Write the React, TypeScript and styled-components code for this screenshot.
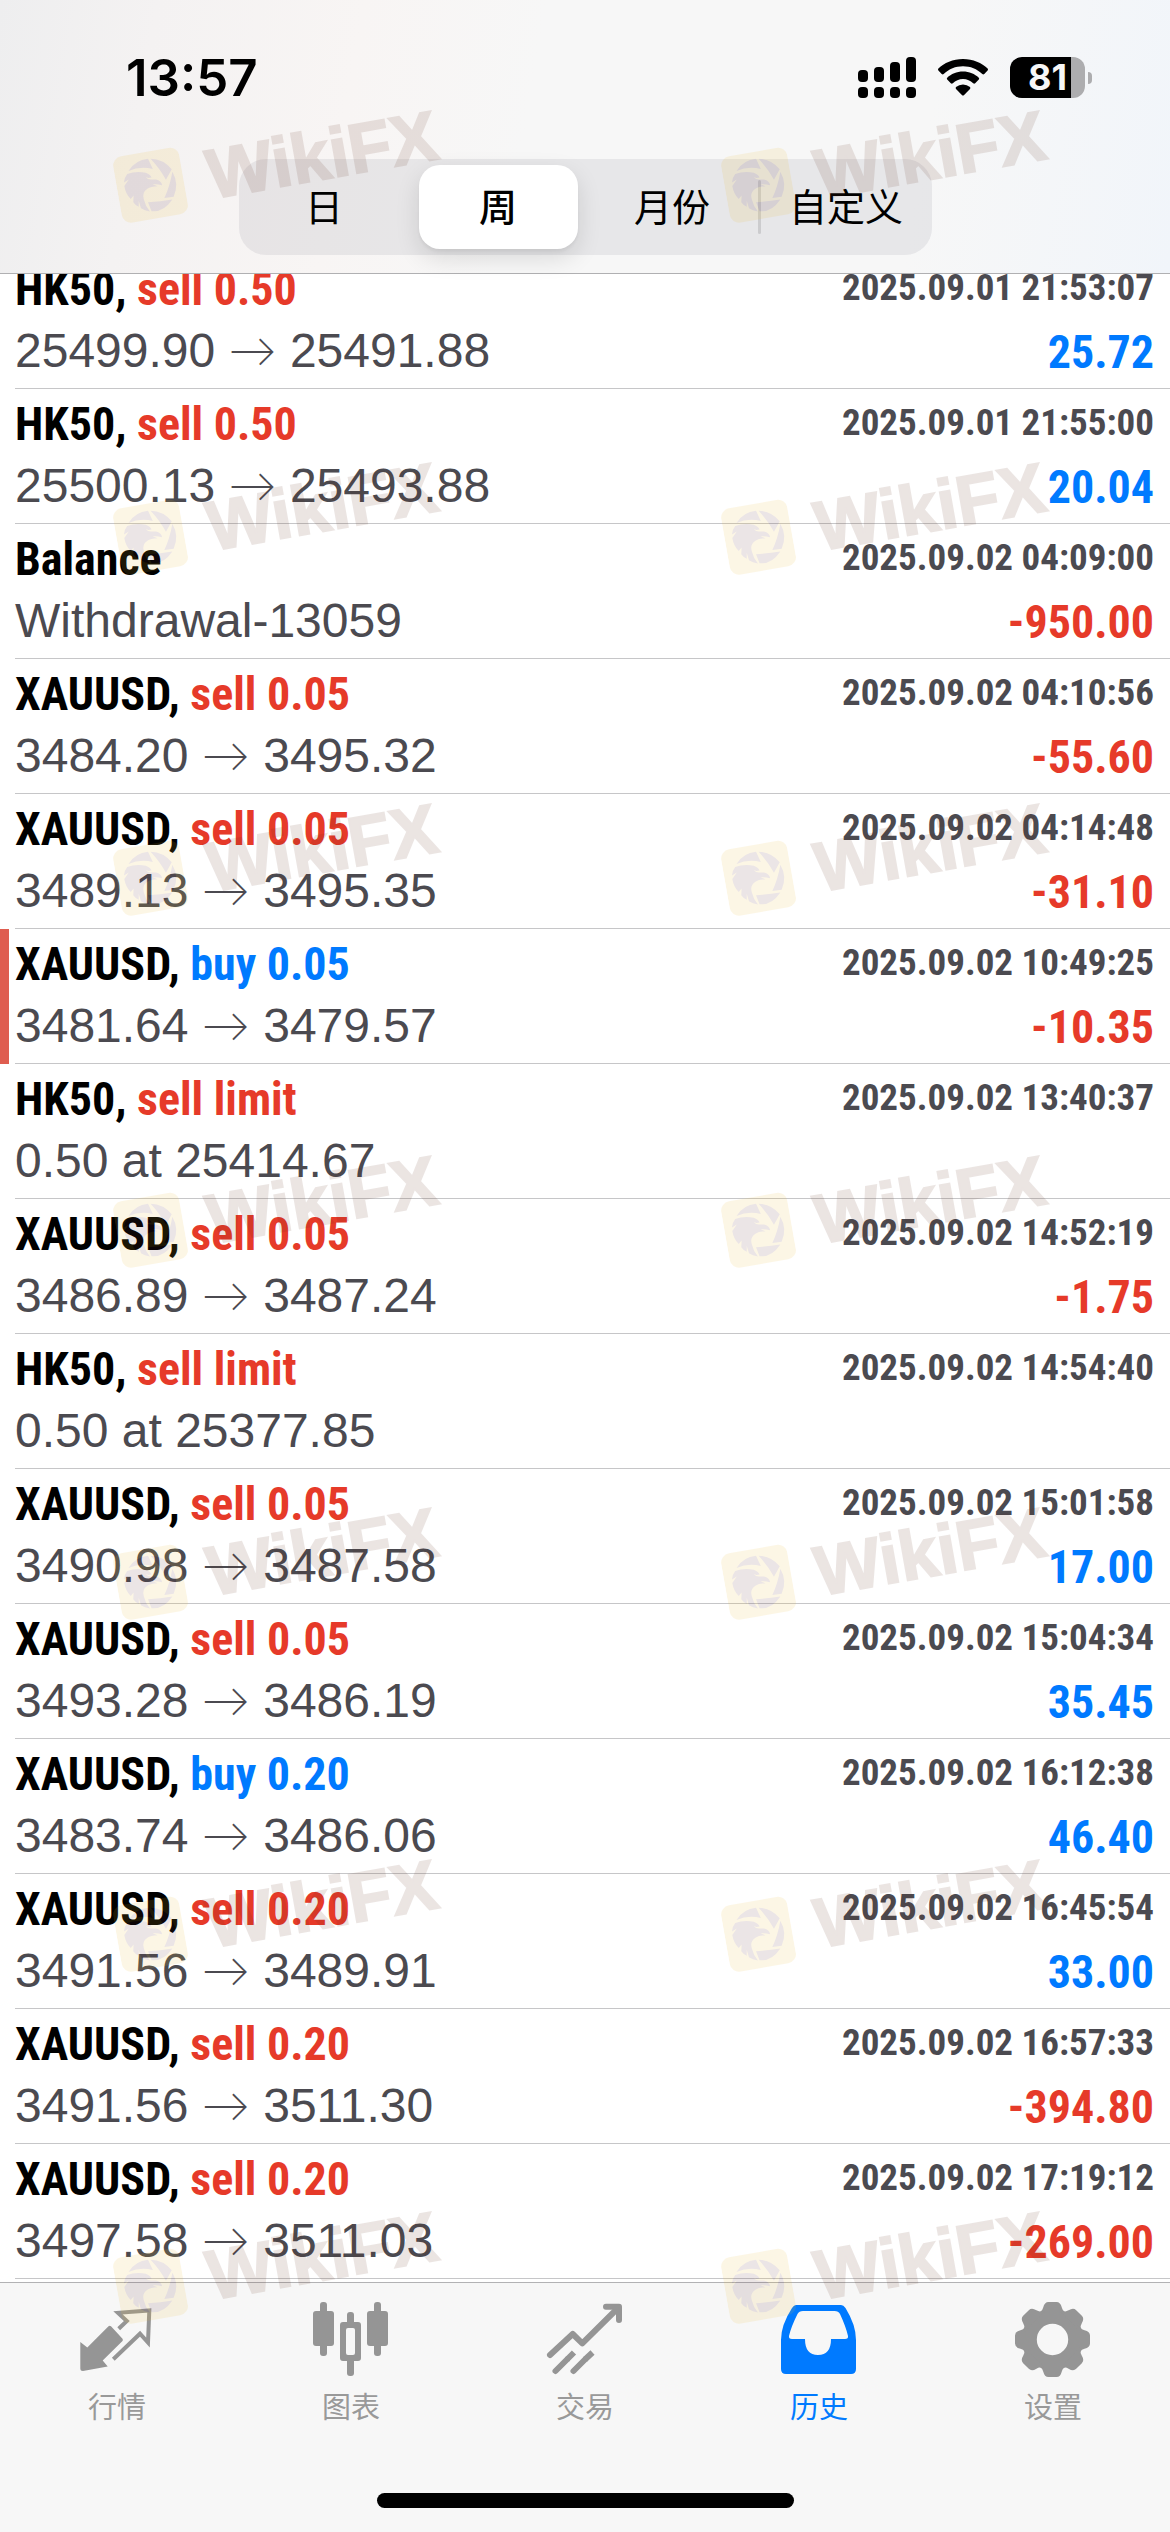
import React, { useState } from 'react';
import styled, { createGlobalStyle, css } from 'styled-components';

const GlobalStyle = createGlobalStyle`
  * { box-sizing: border-box; }
  body { margin: 0; background: #fff; }
  button { font: inherit; color: inherit; border: 0; padding: 0; background: none; cursor: pointer; }
`;

const condensed = '"Roboto Condensed", "Liberation Sans", sans-serif';
const regular = '"Liberation Sans", Arial, sans-serif';
const cjk = 'Inter, "Noto Sans CJK SC", sans-serif';

const blue = '#007aff';
const red = '#e63a29';
const slate = '#4b4a50';

const Screen = styled.div`
  position: relative;
  display: flex;
  flex-direction: column;
  height: 100vh;
  overflow: hidden;
  font-family: ${regular};
`;

const Header = styled.header`
  flex: none;
  padding-bottom: 18px;
  border-bottom: 1px solid #b0b0b2;
  background: linear-gradient(100deg, #eeeeef 0%, #f4f2f2 13%, #f8f5f4 30%, #f7f7f7 45%, #f7f7f7 78%, #f1f5fa 100%);
`;

const StatusBar = styled.div`
  display: flex;
  align-items: center;
  justify-content: space-between;
  height: 155px;
  padding: 0 78px 0 126px;
`;

const Clock = styled.time`
  font: 600 51px/60px Inter, sans-serif;
`;

const StatusIcons = styled.div`
  display: flex;
  align-items: center;
  gap: 22px;
`;

const BatteryWrap = styled.div`
  display: flex;
  align-items: center;
  gap: 3px;
`;

const BatteryBody = styled.div<{ $level: number }>`
  width: 75px;
  height: 41px;
  border-radius: 12px;
  text-align: center;
  color: #f7f7f7;
  font: 700 36px/41px Inter, sans-serif;
  background: linear-gradient(90deg, #000 ${p => p.$level}%, #adadaf ${p => p.$level}%);
`;

const BatteryTip = styled.div`
  width: 4px;
  height: 12px;
  border-radius: 0 4px 4px 0;
  background: #adadaf;
`;

const Segmented = styled.div`
  display: grid;
  grid-template-columns: repeat(4, 1fr);
  gap: 15px;
  width: calc(100% - 48px);
  max-width: 693px;
  height: 96px;
  margin: 4px auto 0;
  padding: 6px;
  border-radius: 27px;
  background: rgba(118, 118, 128, 0.12);
`;

const Segment = styled.button<{ $selected: boolean; $divided: boolean }>`
  && {
    position: relative;
    border-radius: 21px;
    color: #000;
    font: ${p => (p.$selected ? 500 : 400)} 38px/84px ${cjk};
    white-space: nowrap;
    ${p => p.$selected && css`
      background: #fff;
      box-shadow: 0 9px 24px rgba(0, 0, 0, 0.12), 0 3px 3px rgba(0, 0, 0, 0.04);
    `}
  }
  ${p => p.$divided && css`
    &::before {
      content: '';
      position: absolute;
      left: -9px;
      top: 15px;
      width: 3px;
      height: 54px;
      border-radius: 2px;
      background: rgba(142, 142, 147, 0.3);
    }
  `}
`;

const Main = styled.main`
  flex: 1;
  min-height: 0;
  overflow: hidden;
  background: #fff;
`;

/* The list is scrolled, so its first row runs under the header. */
const DealList = styled.ul`
  margin: -20px 0 0;
  padding: 0;
  list-style: none;
`;

const DealItem = styled.li<{ $flagged?: boolean }>`
  padding-left: 6px;
  border-left: 9px solid ${p => (p.$flagged ? '#df5d50' : 'transparent')};
`;

const DealBody = styled.div`
  height: 135px;
  padding: 4px 16px 0 0;
  border-bottom: 1px solid #c6c6c8;
`;

const Line = styled.div`
  display: flex;
  justify-content: space-between;
  height: 63px;
  white-space: nowrap;
`;

const Symbol = styled.span`
  color: #000;
  font: 700 46px/63px ${condensed};
`;

const Action = styled.span<{ $color: string }>`
  color: ${p => p.$color};
`;

const Stamp = styled.time`
  color: ${slate};
  font: 700 37px/60px ${condensed};
`;

const Detail = styled.span`
  color: ${slate};
  font: 400 48px/60px ${regular};
`;

const Arrow = styled.span`
  display: inline-block;
  width: 48px;
  text-align: center;
  font: 300 48px/48px Lato, sans-serif;
`;

const Amount = styled.span<{ $negative: boolean }>`
  color: ${p => (p.$negative ? red : blue)};
  font: 700 46px/62px ${condensed};
`;

const TabBar = styled.nav`
  flex: none;
  display: flex;
  flex-direction: column;
  align-items: center;
  height: 250px;
  padding: 17px 0 24px;
  border-top: 1px solid #b2b2b4;
  background: #f7f7f7;
`;

const Tabs = styled.div`
  display: grid;
  grid-template-columns: repeat(5, 1fr);
  width: 100%;
`;

const Tab = styled.button<{ $active: boolean }>`
  && {
    display: flex;
    flex-direction: column;
    align-items: center;
    gap: 6px;
    color: ${p => (p.$active ? blue : '#959595')};
    font: 400 29px/36px ${cjk};
  }
`;

const TabLabel = styled.span<{ $active: boolean }>`
  color: ${p => (p.$active ? blue : '#999')};
`;

const HomeIndicator = styled.div`
  width: 417px;
  max-width: 60%;
  height: 15px;
  margin-top: auto;
  border-radius: 8px;
  background: #000;
`;

const Overlay = styled.div`
  position: absolute;
  inset: 0;
  overflow: hidden;
  pointer-events: none;
  opacity: 0.12;
`;

const MarkRows = styled.div`
  margin-top: -13px;
`;

const MarkRow = styled.div<{ $height: number }>`
  display: grid;
  grid-template-columns: 52% 48%;
  align-items: center;
  height: ${p => p.$height}px;
`;

const Mark = styled.div`
  display: flex;
  align-items: center;
  gap: 24px;
  width: 324px;
  margin-left: 115px;
  transform: rotate(-10deg);
  color: #612f1e;
  font: 700 70px/80px ${regular};
  -webkit-text-stroke: 2px #612f1e;
`;

function EagleLogo() {
  return (
    <svg width="70" height="70" viewBox="46 67 210 210">
      <rect x="46" y="67" width="210" height="210" rx="30" fill="#eebc2f" />
      <g transform="rotate(10 151 172)" fill="#612f3e">
        <path d="M82 127Q103 93 143 89L158 121Q118 112 82 127Z" />
        <path d="M151 89Q191 90 217 122L199 155Q181 121 151 89Z" />
        <path d="M219 130Q241 168 223 208L194 212Q211 176 219 130Z" />
        <path d="M219 216Q192 256 154 253L143 225Q182 222 219 216Z" />
        <path d="M78 137Q105 127 136 133Q150 138 154 148L144 149L136 146Q142 154 152 154L168 154Q184 157 187 172Q172 167 157 169L173 175Q151 176 141 183Q123 195 130 216Q135 237 149 254Q132 251 121 244L114 220V239Q103 234 97 225L98 204L89 215Q73 199 69 174L83 154L68 163Q69 148 78 137Z" />
      </g>
    </svg>
  );
}

function Watermarks() {
  return (
    <Overlay aria-hidden="true">
      <MarkRows>
        {[352, 352, 330, 374, 330, 374, 330].map((height, i) => (
          <MarkRow key={i} $height={height}>
            <Mark><EagleLogo />WikiFX</Mark>
            <Mark><EagleLogo />WikiFX</Mark>
          </MarkRow>
        ))}
      </MarkRows>
    </Overlay>
  );
}

function SignalIcon() {
  return (
    <svg width="58" height="41" viewBox="0 0 58 41" aria-label="信号" role="img">
      <rect x="0" y="13" width="10" height="12" rx="4" />
      <rect x="16" y="10" width="10" height="15" rx="4" />
      <rect x="32" y="5" width="10" height="20" rx="4" />
      <rect x="48" y="0" width="10" height="25" rx="4" />
      {[0, 16, 32, 48].map(x => <rect key={x} x={x} y="30" width="10" height="11" rx="4" />)}
    </svg>
  );
}

function WifiIcon() {
  return (
    <svg width="50" height="37" viewBox="0 0 50 37" aria-label="Wi-Fi" role="img">
      <path d="M25 0C35 0 44 4 49.600 9.500Q50.400 10.500 49.600 11.500L46.300 15Q45.300 15.800 44.300 15C39 10 32.500 7.300 25 7.300S11 10 5.700 15Q4.700 15.800 3.700 15L.4 11.500Q-.4 10.500 .4 9.500C6 4 15 0 25 0Z" />
      <path d="M25 12.500C31.300 12.500 36.800 15 40.800 18.700Q41.600 19.700 40.800 20.600L37.200 24.300Q36.200 25.100 35.200 24.300C32.500 21.700 29 20 25 20S17.500 21.700 14.800 24.300Q13.800 25.100 12.800 24.300L9.200 20.600Q8.400 19.700 9.200 18.700C13.200 15 18.700 12.500 25 12.500Z" />
      <path d="M25 25.500Q29 25.500 32 28Q32.800 29 32 29.900L25.900 36.200Q25 37 24.100 36.200L18 29.900Q17.200 29 18 28Q21 25.500 25 25.500Z" />
    </svg>
  );
}

function TabIcon({ children }: { children: React.ReactNode }) {
  return (
    <svg width="84" height="84" viewBox="0 0 84 84" fill="currentColor" aria-hidden="true">
      {children}
    </svg>
  );
}

const icons = {
  quotes: (
    <TabIcon>
      <path d="M5.300 42L12.300 47.500L33.500 26.300Q34.700 25.300 36 26.300L47.500 38.800Q48.300 40 47.500 41L27.700 60.500L32.700 66.500L8 71Q5.300 71 5.300 68.500Z" />
      <path d="M43.700 28.700L51.800 21L43 12.800L74.300 10.500L73 42.500L65 33.700L38.300 59.300" fill="none" stroke="currentColor" strokeWidth="4" />
    </TabIcon>
  ),
  charts: (
    <TabIcon>
      <rect x="4" y="11" width="21" height="35" rx="3" />
      <rect x="11" y="2" width="7" height="54" rx="3" />
      <rect x="58" y="11" width="21" height="35" rx="3" />
      <rect x="65" y="2" width="7" height="54" rx="3" />
      <rect x="38" y="12" width="7" height="14" rx="3" />
      <rect x="38" y="57" width="7" height="19" rx="3" />
      <path fillRule="evenodd" d="M34 22H49Q52 22 52 25V58Q52 61 49 61H34Q31 61 31 58V25Q31 22 34 22ZM39 28Q37 28 37 30V53Q37 55 39 55H44Q46 55 46 53V30Q46 28 44 28Z" />
    </TabIcon>
  ),
  trade: (
    <TabIcon>
      <g fill="none" stroke="currentColor" strokeWidth="6" strokeLinecap="round" strokeLinejoin="round">
        <path d="M7 55L29.700 34L39.300 43.300L75 8" />
        <path d="M63 6.800H76V20" />
        <path d="M12.500 71L24 59.500M30.500 71L42 59.500" />
        <path d="M24 59.500L31 52.500M42 59.500L49.500 52.500" strokeLinecap="butt" />
      </g>
    </TabIcon>
  ),
  history: (
    <TabIcon>
      <path fillRule="evenodd" d="M19 5H64Q66.500 5 68.500 8Q79 25 79 40V69Q79 74 74 74H9Q4 74 4 69V40Q4 25 15 8Q17 5 19 5ZM26 11Q22 11 20.500 14Q14 27 12 36Q11.500 39 15 39H28Q28 55 41 55Q54 55 54 39H68Q71.500 39 71 36Q69 27 63 14Q61.500 11 57.500 11Z" />
    </TabIcon>
  ),
  settings: (
    <TabIcon>
      <g transform="translate(41.500 39.500)">
        <circle r="22.700" fill="none" stroke="currentColor" strokeWidth="14" />
        {[0, 45, 90, 135, 180, 225, 270, 315].map(angle => (
          <path
            key={angle}
            transform={`rotate(${angle})`}
            d="M-14 -25L-12 -28Q-10 -29 -9.300 -32Q-8 -37.500 -4 -37.500H4Q8 -37.500 9.300 -32Q10 -29 12 -28L14 -25Z"
          />
        ))}
      </g>
    </TabIcon>
  ),
};

type Deal = {
  symbol: string;
  action?: string;
  time: string;
  detail: string;
  amount?: string;
  flagged?: boolean;
};

const deals: Deal[] = [
  { symbol: 'HK50', action: 'sell 0.50', time: '2025.09.01 21:53:07', detail: '25499.90 → 25491.88', amount: '25.72' },
  { symbol: 'HK50', action: 'sell 0.50', time: '2025.09.01 21:55:00', detail: '25500.13 → 25493.88', amount: '20.04' },
  { symbol: 'Balance', time: '2025.09.02 04:09:00', detail: 'Withdrawal-13059', amount: '-950.00' },
  { symbol: 'XAUUSD', action: 'sell 0.05', time: '2025.09.02 04:10:56', detail: '3484.20 → 3495.32', amount: '-55.60' },
  { symbol: 'XAUUSD', action: 'sell 0.05', time: '2025.09.02 04:14:48', detail: '3489.13 → 3495.35', amount: '-31.10' },
  { symbol: 'XAUUSD', action: 'buy 0.05', time: '2025.09.02 10:49:25', detail: '3481.64 → 3479.57', amount: '-10.35', flagged: true },
  { symbol: 'HK50', action: 'sell limit', time: '2025.09.02 13:40:37', detail: '0.50 at 25414.67' },
  { symbol: 'XAUUSD', action: 'sell 0.05', time: '2025.09.02 14:52:19', detail: '3486.89 → 3487.24', amount: '-1.75' },
  { symbol: 'HK50', action: 'sell limit', time: '2025.09.02 14:54:40', detail: '0.50 at 25377.85' },
  { symbol: 'XAUUSD', action: 'sell 0.05', time: '2025.09.02 15:01:58', detail: '3490.98 → 3487.58', amount: '17.00' },
  { symbol: 'XAUUSD', action: 'sell 0.05', time: '2025.09.02 15:04:34', detail: '3493.28 → 3486.19', amount: '35.45' },
  { symbol: 'XAUUSD', action: 'buy 0.20', time: '2025.09.02 16:12:38', detail: '3483.74 → 3486.06', amount: '46.40' },
  { symbol: 'XAUUSD', action: 'sell 0.20', time: '2025.09.02 16:45:54', detail: '3491.56 → 3489.91', amount: '33.00' },
  { symbol: 'XAUUSD', action: 'sell 0.20', time: '2025.09.02 16:57:33', detail: '3491.56 → 3511.30', amount: '-394.80' },
  { symbol: 'XAUUSD', action: 'sell 0.20', time: '2025.09.02 17:19:12', detail: '3497.58 → 3511.03', amount: '-269.00' },
];

const periods = ['日', '周', '月份', '自定义'];

const tabs: { label: string; icon: keyof typeof icons }[] = [
  { label: '行情', icon: 'quotes' },
  { label: '图表', icon: 'charts' },
  { label: '交易', icon: 'trade' },
  { label: '历史', icon: 'history' },
  { label: '设置', icon: 'settings' },
];

function DealRow({ deal }: { deal: Deal }) {
  const [open, close] = deal.detail.split(' → ');
  return (
    <DealItem $flagged={deal.flagged}>
      <DealBody>
        <Line>
          <Symbol>
            {deal.symbol}
            {deal.action && (
              <>, <Action $color={deal.action.startsWith('buy') ? blue : red}>{deal.action}</Action></>
            )}
          </Symbol>
          <Stamp>{deal.time}</Stamp>
        </Line>
        <Line>
          <Detail>{open}{close && <> <Arrow>→</Arrow> {close}</>}</Detail>
          {deal.amount && <Amount $negative={deal.amount.startsWith('-')}>{deal.amount}</Amount>}
        </Line>
      </DealBody>
    </DealItem>
  );
}

export default function App() {
  const [period, setPeriod] = useState(1);
  const [tab, setTab] = useState(3);

  return (
    <Screen>
      <GlobalStyle />
      <Header>
        <StatusBar>
          <Clock>13:57</Clock>
          <StatusIcons>
            <SignalIcon />
            <WifiIcon />
            <BatteryWrap>
              <BatteryBody $level={81}>81</BatteryBody>
              <BatteryTip />
            </BatteryWrap>
          </StatusIcons>
        </StatusBar>
        <Segmented>
          {periods.map((label, i) => (
            <Segment
              key={label}
              type="button"
              aria-pressed={i === period}
              $selected={i === period}
              $divided={i > 0 && i !== period && i - 1 !== period}
              onClick={() => setPeriod(i)}
            >
              {label}
            </Segment>
          ))}
        </Segmented>
      </Header>
      <Main>
        <DealList>
          {deals.map(deal => <DealRow key={deal.time} deal={deal} />)}
        </DealList>
      </Main>
      <TabBar>
        <Tabs>
          {tabs.map(({ label, icon }, i) => (
            <Tab key={label} type="button" $active={i === tab} onClick={() => setTab(i)}>
              {icons[icon]}
              <TabLabel $active={i === tab}>{label}</TabLabel>
            </Tab>
          ))}
        </Tabs>
        <HomeIndicator />
      </TabBar>
      <Watermarks />
    </Screen>
  );
}
